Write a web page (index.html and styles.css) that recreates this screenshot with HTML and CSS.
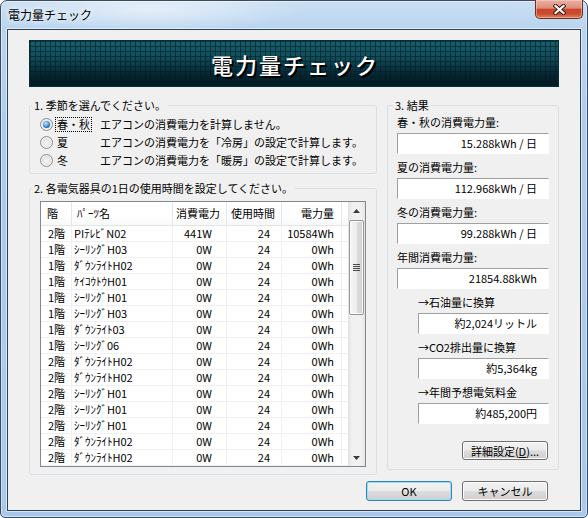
FILE: index.html
```html
<!DOCTYPE html>
<html lang="ja">
<head>
<meta charset="utf-8">
<title>電力量チェック</title>
<link rel="stylesheet" href="styles.css">
</head>
<body>
<div class="window">
  <div class="titlebar">
    <span class="title">電力量チェック</span>
    <button class="close" aria-label="閉じる">
      <svg width="13" height="11" viewBox="0 0 13 11"><path class="x-out" d="M2.5 2 L10.5 9 M10.5 2 L2.5 9"/><path class="x-in" d="M2.5 2 L10.5 9 M10.5 2 L2.5 9"/></svg>
    </button>
  </div>
  <div class="client">
    <div class="banner"><h1>電力量チェック</h1></div>
    <div class="main">
      <div class="leftcol">
        <fieldset class="group g1">
          <legend>1. 季節を選んでください。</legend>
          <div class="gbody seasons">
            <div class="season"><span class="radio on"></span><span class="sname"><span class="focus">春・秋</span></span><span class="sdesc">エアコンの消費電力を計算しません。</span></div>
            <div class="season"><span class="radio"></span><span class="sname">夏</span><span class="sdesc">エアコンの消費電力を「冷房」の設定で計算します。</span></div>
            <div class="season"><span class="radio"></span><span class="sname">冬</span><span class="sdesc">エアコンの消費電力を「暖房」の設定で計算します。</span></div>
          </div>
        </fieldset>
        <fieldset class="group g2">
          <legend>2. 各電気器具の1日の使用時間を設定してください。</legend>
          <div class="gbody lvwrap">
            <div class="listview">
              <div class="lv-main">
                <div class="lv-head">
                  <span class="c1">階</span><span class="c2">ﾊﾟｰﾂ名</span><span class="c3">消費電力</span><span class="c4">使用時間</span><span class="c5">電力量</span><span class="c6"></span>
                </div>
                <div class="lv-rows">
                  <div class="lv-row"><span class="c1">2階</span><span class="c2">PIﾃﾚﾋﾞN02</span><span class="c3">441W</span><span class="c4">24</span><span class="c5">10584Wh</span><span class="c6"></span></div>
                  <div class="lv-row"><span class="c1">1階</span><span class="c2">ｼｰﾘﾝｸﾞH03</span><span class="c3">0W</span><span class="c4">24</span><span class="c5">0Wh</span><span class="c6"></span></div>
                  <div class="lv-row"><span class="c1">1階</span><span class="c2">ﾀﾞｳﾝﾗｲﾄH02</span><span class="c3">0W</span><span class="c4">24</span><span class="c5">0Wh</span><span class="c6"></span></div>
                  <div class="lv-row"><span class="c1">1階</span><span class="c2">ｹｲｺｳﾄｳH01</span><span class="c3">0W</span><span class="c4">24</span><span class="c5">0Wh</span><span class="c6"></span></div>
                  <div class="lv-row"><span class="c1">1階</span><span class="c2">ｼｰﾘﾝｸﾞH01</span><span class="c3">0W</span><span class="c4">24</span><span class="c5">0Wh</span><span class="c6"></span></div>
                  <div class="lv-row"><span class="c1">1階</span><span class="c2">ｼｰﾘﾝｸﾞH03</span><span class="c3">0W</span><span class="c4">24</span><span class="c5">0Wh</span><span class="c6"></span></div>
                  <div class="lv-row"><span class="c1">1階</span><span class="c2">ﾀﾞｳﾝﾗｲﾄ03</span><span class="c3">0W</span><span class="c4">24</span><span class="c5">0Wh</span><span class="c6"></span></div>
                  <div class="lv-row"><span class="c1">1階</span><span class="c2">ｼｰﾘﾝｸﾞ06</span><span class="c3">0W</span><span class="c4">24</span><span class="c5">0Wh</span><span class="c6"></span></div>
                  <div class="lv-row"><span class="c1">2階</span><span class="c2">ﾀﾞｳﾝﾗｲﾄH02</span><span class="c3">0W</span><span class="c4">24</span><span class="c5">0Wh</span><span class="c6"></span></div>
                  <div class="lv-row"><span class="c1">2階</span><span class="c2">ﾀﾞｳﾝﾗｲﾄH02</span><span class="c3">0W</span><span class="c4">24</span><span class="c5">0Wh</span><span class="c6"></span></div>
                  <div class="lv-row"><span class="c1">2階</span><span class="c2">ｼｰﾘﾝｸﾞH01</span><span class="c3">0W</span><span class="c4">24</span><span class="c5">0Wh</span><span class="c6"></span></div>
                  <div class="lv-row"><span class="c1">2階</span><span class="c2">ｼｰﾘﾝｸﾞH01</span><span class="c3">0W</span><span class="c4">24</span><span class="c5">0Wh</span><span class="c6"></span></div>
                  <div class="lv-row"><span class="c1">2階</span><span class="c2">ｼｰﾘﾝｸﾞH01</span><span class="c3">0W</span><span class="c4">24</span><span class="c5">0Wh</span><span class="c6"></span></div>
                  <div class="lv-row"><span class="c1">2階</span><span class="c2">ﾀﾞｳﾝﾗｲﾄH02</span><span class="c3">0W</span><span class="c4">24</span><span class="c5">0Wh</span><span class="c6"></span></div>
                  <div class="lv-row"><span class="c1">2階</span><span class="c2">ﾀﾞｳﾝﾗｲﾄH02</span><span class="c3">0W</span><span class="c4">24</span><span class="c5">0Wh</span><span class="c6"></span></div>
                </div>
              </div>
              <div class="vscroll">
                <div class="sb-btn"><svg width="7" height="4" viewBox="0 0 7 4"><path d="M0 4 L3.5 0 L7 4 Z"/></svg></div>
                <div class="sb-track"><div class="sb-thumb"><span class="grip"></span></div></div>
                <div class="sb-btn"><svg width="7" height="4" viewBox="0 0 7 4"><path d="M0 0 L7 0 L3.5 4 Z"/></svg></div>
              </div>
            </div>
          </div>
        </fieldset>
      </div>
      <fieldset class="group g3">
        <legend>3. 結果</legend>
        <div class="gbody results">
          <div class="rlabel">春・秋の消費電力量:</div>
          <div class="field">15.288kWh / 日</div>
          <div class="rlabel">夏の消費電力量:</div>
          <div class="field">112.968kWh / 日</div>
          <div class="rlabel">冬の消費電力量:</div>
          <div class="field">99.288kWh / 日</div>
          <div class="rlabel">年間消費電力量:</div>
          <div class="field">21854.88kWh</div>
          <div class="rlabel sub">→石油量に換算</div>
          <div class="field sub">約2,024リットル</div>
          <div class="rlabel sub">→CO2排出量に換算</div>
          <div class="field sub">約5,364kg</div>
          <div class="rlabel sub">→年間予想電気料金</div>
          <div class="field sub">約485,200円</div>
          <button class="btn detail">詳細設定(<u>D</u>)...</button>
        </div>
      </fieldset>
    </div>
    <div class="buttons">
      <button class="btn default">OK</button>
      <button class="btn">キャンセル</button>
    </div>
  </div>
</div>
</body>
</html>
```

FILE: styles.css
```css
* { box-sizing: border-box; }
html, body { margin: 0; padding: 0; }
body {
  width: 588px;
  height: 518px;
  overflow: hidden;
  background: #ffffff;
  font-family: "Noto Sans CJK JP", "Noto Sans", sans-serif;
  font-size: 11px;
  color: #000;
}

/* ---------- window frame ---------- */
.window {
  width: 588px;
  height: 518px;
  border: 1px solid #3b4a5c;
  border-radius: 7px 7px 5px 5px;
  background:
    radial-gradient(ellipse 220px 34px at 150px 8px, rgba(255,255,255,0.55), rgba(255,255,255,0) 70%),
    linear-gradient(180deg, #cadff4 0px, #b9d4ef 28px, #aecdec 120px, #a9c9ea 100%);
  box-shadow: inset 0 0 0 1px rgba(255,255,255,0.45);
  padding: 0 6px 6px;
  display: flex;
  flex-direction: column;
}
.titlebar {
  height: 28px;
  flex: none;
  display: flex;
  justify-content: space-between;
  align-items: flex-start;
}
.title {
  font-size: 12px;
  line-height: 16px;
  padding: 6px 0 0 1px;
  color: #000;
  text-shadow: 0 0 5px #fff, 0 0 8px rgba(255,255,255,0.9);
}
.close {
  width: 48px;
  height: 19px;
  margin: -1px -2px 0 0;
  padding: 0;
  border: 1px solid #6a2e25;
  border-top: none;
  border-radius: 0 0 5px 5px;
  background: linear-gradient(180deg, #eab2a5 0%, #de8d7a 45%, #c9452b 52%, #cc4c2f 78%, #e0825c 100%);
  box-shadow: inset 0 0 0 1px rgba(255,220,210,0.45);
  display: flex;
  align-items: center;
  justify-content: center;
}
.close svg { display: block; margin-top: 1px; }
.x-out { stroke: #3d1a14; stroke-width: 4.2; fill: none; stroke-linecap: square; }
.x-in { stroke: #fff; stroke-width: 2.2; fill: none; stroke-linecap: square; }

/* ---------- client area ---------- */
.client {
  flex: 1;
  border: 1px solid #2f4255;
  background: #f0f0f0;
  box-shadow: 0 0 0 1px rgba(255,255,255,0.55);
  padding: 10px 21px 0;
  display: flex;
  flex-direction: column;
}

.banner {
  height: 47px;
  flex: none;
  border: 1px solid #08303a;
  background:
    linear-gradient(180deg, rgba(3,33,43,0) 0%, rgba(3,33,43,0.25) 35%, rgba(2,28,38,0.85) 75%, #021b25 100%),
    repeating-linear-gradient(90deg, rgba(3,40,50,0.75) 0 1px, rgba(0,0,0,0) 1px 5px),
    repeating-linear-gradient(180deg, rgba(3,40,50,0.75) 0 1px, rgba(0,0,0,0) 1px 5px),
    #175e6b;
  display: flex;
  align-items: center;
  justify-content: center;
}
.banner h1 {
  margin: 0;
  padding-left: 2px;
  font-size: 22px;
  font-weight: 500;
  line-height: 26px;
  letter-spacing: 2px;
  color: #ffffff;
  text-shadow: 2px 2px 0 #000, 1px 1px 0 #000;
}

.main {
  display: flex;
  gap: 10px;
  margin-top: 11px;
  height: 372px;
  flex: none;
}
.leftcol {
  width: 348px;
  display: flex;
  flex-direction: column;
  gap: 7px;
}

/* ---------- group boxes ---------- */
.group {
  margin: 0;
  padding: 0;
  min-width: 0;
  border: 1px solid #d5dfe5;
  border-radius: 3px;
}
.group legend {
  margin-left: 2px;
  padding: 0 2px;
  font-size: 11px;
  line-height: 14px;
}
.g3 legend { margin-left: 5px; }
.g2 { flex: 1; display: flex; flex-direction: column; }
.g3 { width: 172px; display: flex; flex-direction: column; }

.seasons { padding: 3px 0 4px 10px; }
.season {
  display: flex;
  align-items: center;
  height: 18px;
  line-height: 14px;
}
.radio {
  width: 13px;
  height: 13px;
  flex: none;
  border-radius: 50%;
  border: 1px solid #8b8e91;
  background: radial-gradient(circle at 50% 55%, #f6f6f6 0%, #e6e6e6 45%, #cfd1d3 100%);
  box-shadow: inset 0 0 0 1px rgba(255,255,255,0.7);
  display: flex;
  align-items: center;
  justify-content: center;
}
.radio.on::after {
  content: "";
  width: 7px;
  height: 7px;
  border-radius: 50%;
  background: radial-gradient(circle at 40% 35%, #c9e6ff 0%, #5ea3e6 40%, #1f5fa8 75%, #173f70 100%);
}
.sname {
  width: 45px;
  flex: none;
  margin-left: 2px;
}
.focus {
  display: inline-block;
  border: 1px dotted #000;
  padding: 0 1px;
  line-height: 13px;
}
.sname:not(:has(.focus)) { padding-left: 2px; }

/* ---------- list view ---------- */
.lvwrap {
  flex: 1;
  padding: 6px 10px 7px 10px;
  display: flex;
}
.listview {
  flex: 1;
  border: 1px solid #828790;
  background: #fff;
  display: flex;
  overflow: hidden;
}
.lv-main { flex: 1; overflow: hidden; }
.lv-head, .lv-row {
  display: grid;
  grid-template-columns: 31px 101px 54px 55px 60px 1fr;
}
.lv-head {
  height: 24px;
  line-height: 22px;
  background: linear-gradient(180deg, #ffffff 0%, #ffffff 60%, #f7f8f9 100%);
  border-bottom: 1px solid #e5e5e5;
}
.lv-head span {
  border-right: 1px solid #e3e6ea;
  white-space: nowrap;
  overflow: hidden;
}
.lv-head .c6 { border-right: none; }
.lv-head .c1 { padding-left: 6px; }
.lv-head .c2 { padding-left: 5px; }
.lv-head .c3, .lv-head .c4 { text-align: right; padding-right: 6px; }
.lv-head .c5 { text-align: right; padding-right: 7px; }

.lv-row {
  height: 16px;
  line-height: 15px;
  border-bottom: 1px solid #f0f0f0;
}
.lv-row span {
  border-right: 1px solid #f0f0f0;
  white-space: nowrap;
  overflow: hidden;
}
.lv-row .c6 { border-right: none; }
.lv-row .c1 { padding-left: 7px; }
.lv-row .c2 { padding-left: 2px; }
.lv-row .c3 { text-align: right; padding-right: 14px; }
.lv-row .c4 { text-align: right; padding-right: 11px; }
.lv-row .c5 { text-align: right; padding-right: 7px; }

.vscroll {
  width: 17px;
  flex: none;
  display: flex;
  flex-direction: column;
  background: linear-gradient(90deg, #e3e3e3 0%, #f1f1f1 25%, #f1f1f1 75%, #e6e6e6 100%);
}
.sb-btn {
  height: 17px;
  flex: none;
  display: flex;
  align-items: center;
  justify-content: center;
}
.sb-btn path { fill: #3c3c3c; }
.sb-track { flex: 1; padding-top: 1px; }
.sb-thumb {
  height: 95px;
  margin: 0 0 0 1px;
  width: 15px;
  border: 1px solid #979797;
  border-radius: 2px;
  background: linear-gradient(90deg, #f4f4f4 0%, #ececec 50%, #dcdcdc 51%, #d2d2d2 100%);
  box-shadow: inset 0 0 0 1px rgba(255,255,255,0.8);
  display: flex;
  align-items: center;
  justify-content: center;
}
.grip {
  width: 7px;
  height: 7px;
  background: repeating-linear-gradient(180deg, #4a4a4a 0 1px, rgba(0,0,0,0) 1px 2px);
}

/* ---------- results ---------- */
.results {
  padding: 2px 9px 0 9px;
  display: flex;
  flex-direction: column;
}
.rlabel {
  height: 16px;
  line-height: 16px;
  margin-bottom: 3px;
  white-space: nowrap;
}
.field {
  height: 21px;
  line-height: 19px;
  margin-bottom: 5px;
  background: #fff;
  border-top: 1px solid #a0a0a0;
  border-left: 1px solid #a0a0a0;
  border-right: 1px solid #ffffff;
  border-bottom: 1px solid #ffffff;
  text-align: right;
  padding-right: 11px;
  white-space: nowrap;
}
.sub { margin-left: 21px; }

/* ---------- buttons ---------- */
.btn {
  height: 20px;
  width: 86px;
  padding: 0;
  font-family: inherit;
  font-size: 11px;
  line-height: 16px;
  color: #000;
  border: 1px solid #707070;
  border-radius: 3px;
  background: linear-gradient(180deg, #f2f2f2 0%, #ebebeb 48%, #dddddd 52%, #cfcfcf 100%);
  box-shadow: inset 0 0 0 1px #fbfbfb;
}
.btn.default {
  border-color: #3c7fb1;
  box-shadow: inset 0 0 0 1px #93e0f9;
}
.detail {
  align-self: flex-end;
  margin-top: 12px;
  margin-right: 1px;
  height: 19px;
}
.buttons {
  display: flex;
  justify-content: flex-end;
  gap: 10px;
  margin-top: 11px;
  padding-right: 11px;
}
```
